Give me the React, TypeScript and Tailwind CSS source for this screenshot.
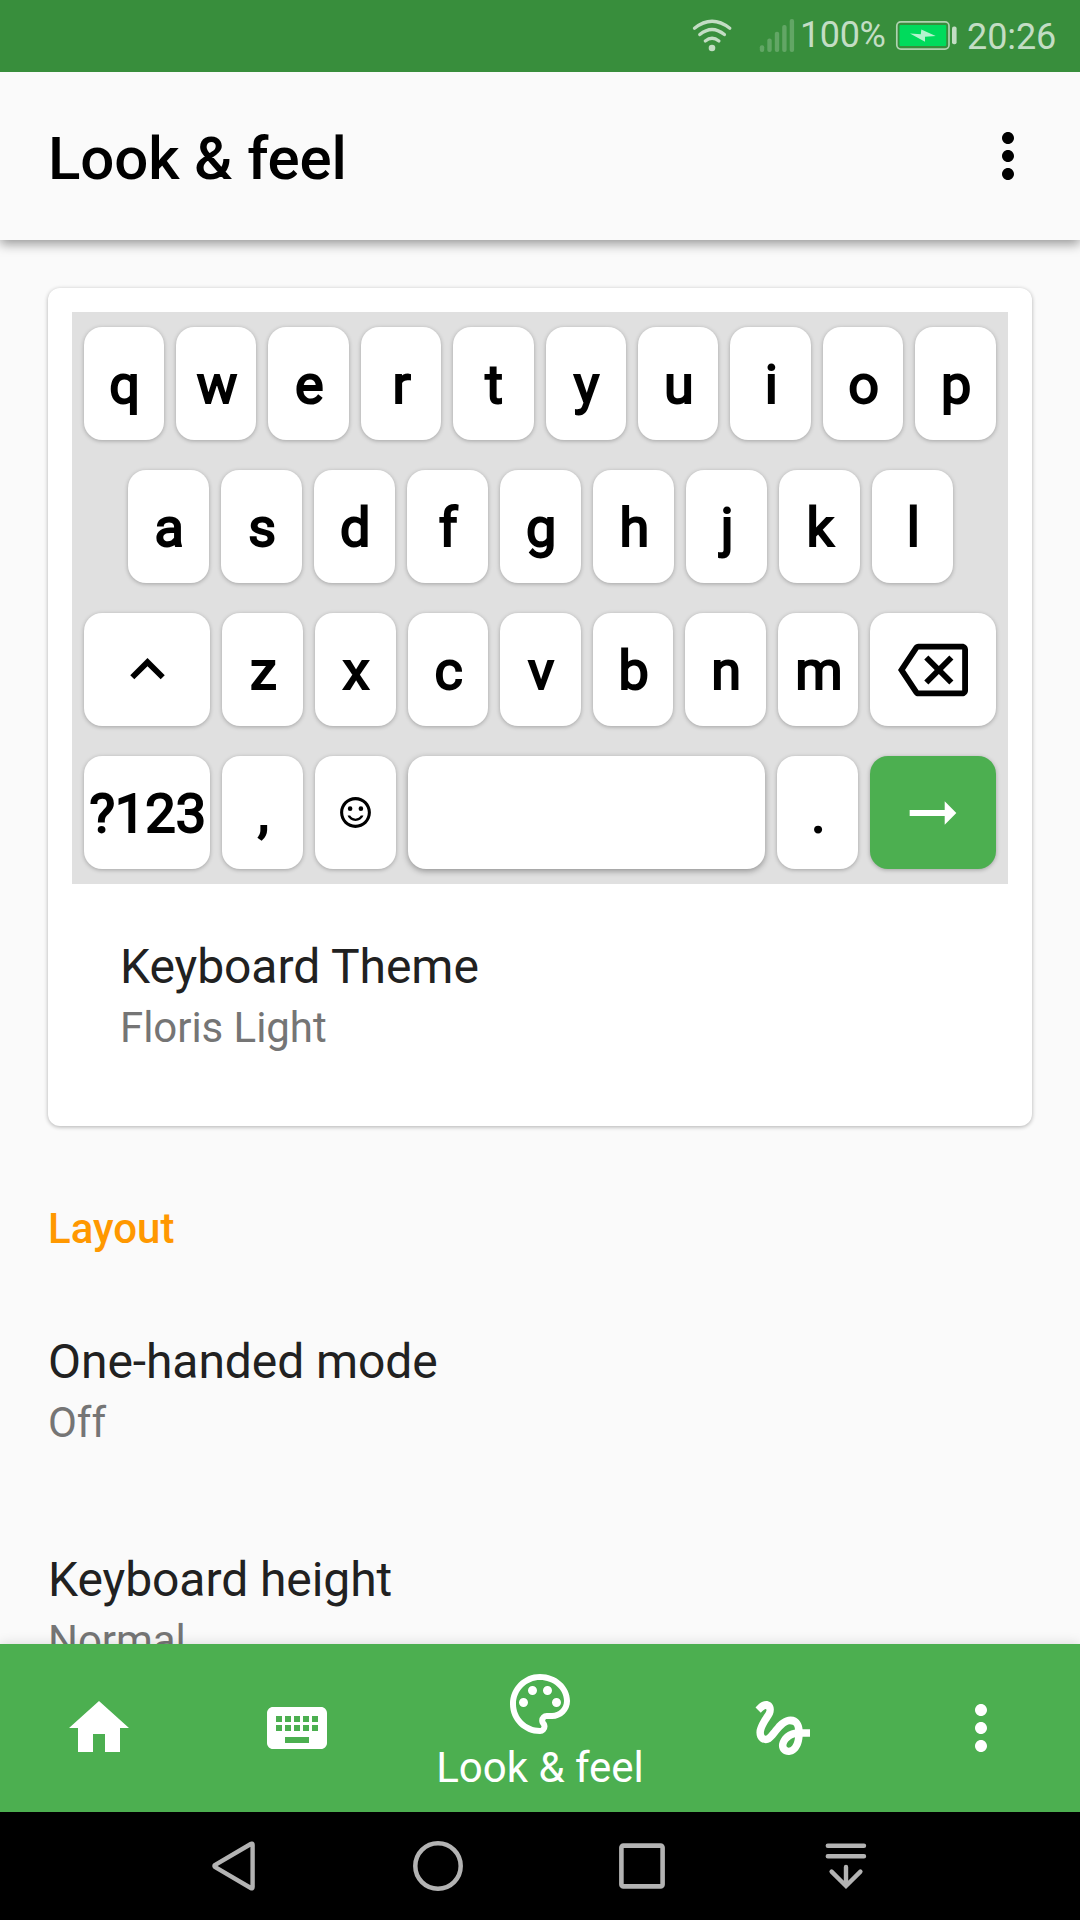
import React from "react";

const PATHS = {
  more: "M12 8c1.1 0 2-.9 2-2s-.9-2-2-2-2 .9-2 2 .9 2 2 2zm0 2c-1.1 0-2 .9-2 2s.9 2 2 2 2-.9 2-2-.9-2-2-2zm0 6c-1.1 0-2 .9-2 2s.9 2 2 2 2-.9 2-2-.9-2-2-2z",
  home: "M10 20v-6h4v6h5v-8h3L12 3 2 12h3v8z",
  keyboard:
    "M20 5H4c-1.1 0-1.99.9-1.99 2L2 17c0 1.1.9 2 2 2h16c1.1 0 2-.9 2-2V7c0-1.1-.9-2-2-2zm-9 3h2v2h-2V8zm0 3h2v2h-2v-2zM8 8h2v2H8V8zm0 3h2v2H8v-2zm-1 2H5v-2h2v2zm0-3H5V8h2v2zm9 7H8v-2h8v2zm0-4h-2v-2h2v2zm0-3h-2V8h2v2zm3 3h-2v-2h2v2zm0-3h-2V8h2v2z",
  palette:
    "M12 22C6.49 22 2 17.51 2 12S6.49 2 12 2s10 4.04 10 9c0 3.31-2.69 6-6 6h-1.77c-.28 0-.5.22-.5.5 0 .12.05.23.13.33.41.47.64 1.06.64 1.67A2.5 2.5 0 0112 22zm0-18c-4.41 0-8 3.59-8 8s3.59 8 8 8c.28 0 .5-.22.5-.5a.54.54 0 00-.14-.35c-.41-.46-.63-1.05-.63-1.65a2.5 2.5 0 012.5-2.5H16c2.21 0 4-1.79 4-4 0-3.86-3.59-7-8-7z M6.5 10a1.5 1.5 0 100 3 1.5 1.5 0 100-3z M9.5 6a1.5 1.5 0 100 3 1.5 1.5 0 100-3z M14.5 6a1.5 1.5 0 100 3 1.5 1.5 0 100-3z M17.5 10a1.5 1.5 0 100 3 1.5 1.5 0 100-3z",
  gesture:
    "M4.59 6.89c.7-.71 1.4-1.35 1.71-1.22.5.2 0 1.03-.3 1.52-.25.42-2.86 3.89-2.86 6.31 0 1.28.48 2.34 1.34 2.98.75.56 1.74.73 2.64.46 1.07-.31 1.95-1.4 3.06-2.77 1.21-1.49 2.83-3.44 4.08-3.44 1.63 0 1.65 1.01 1.76 1.79-3.78.64-5.38 3.67-5.38 5.37 0 1.7 1.44 3.09 3.21 3.09 1.63 0 4.29-1.33 4.69-6.1H21v-2.5h-2.47c-.15-1.65-1.09-4.2-4.03-4.2-2.25 0-4.18 1.91-4.94 2.84-.58.73-2.06 2.48-2.29 2.72-.25.3-.68.84-1.11.84-.45 0-.72-.83-.36-1.92.35-1.09 1.4-2.86 1.85-3.52.78-1.14 1.3-1.92 1.3-3.28C8.95 3.69 7.31 3 6.44 3 5.12 3 3.97 4 3.72 4.25c-.36.36-.66.66-.88.93l1.75 1.71zm9.29 11.66c-.31 0-.74-.26-.74-.72 0-.6.73-2.2 2.87-2.76-.3 2.69-1.43 3.48-2.13 3.48z",
  shift: "M7.41 15.41L12 10.83l4.59 4.58L18 14l-6-6-6 6z",
  backspace:
    "M22 3H7c-.69 0-1.23.35-1.59.88L0 12l5.41 8.11c.36.53.9.89 1.59.89h15c1.1 0 2-.9 2-2V5c0-1.1-.9-2-2-2zm0 16H7.07L2.4 12l4.66-7H22v14zm-11.59-2L14 13.41 17.59 17 19 15.59 15.41 12 19 8.41 17.59 7 14 10.59 10.41 7 9 8.41 12.59 12 9 15.59z",
  enter: "M16.01 11H4v2h12.01v3L20 12l-3.99-4v3z",
  smile:
    "M15.5 8a1.5 1.5 0 100 3 1.5 1.5 0 100-3z M8.5 8a1.5 1.5 0 100 3 1.5 1.5 0 100-3z M12 16c-1.48 0-2.75-.81-3.45-2H6.88c.8 2.05 2.79 3.5 5.12 3.5s4.32-1.45 5.12-3.5h-1.67c-.69 1.19-1.97 2-3.45 2zm-.01-14C6.47 2 2 6.48 2 12s4.47 10 9.99 10C17.52 22 22 17.52 22 12S17.52 2 11.99 2zM12 20c-4.42 0-8-3.58-8-8s3.58-8 8-8 8 3.58 8 8-3.58 8-8 8z",
};

function Icon({ name, className = "size-[72px]" }: { name: keyof typeof PATHS; className?: string }) {
  return (
    <svg viewBox="0 0 24 24" fill="currentColor" className={`block shrink-0 ${className}`}>
      <path d={PATHS[name]} />
    </svg>
  );
}

function StatusBar() {
  return (
    <div className="flex h-[72px] shrink-0 bg-[#388e3c] pl-[690px] text-[#c3ddc4]">
      <svg className="block h-[72px] w-[44px] shrink-0" viewBox="690 0 44 72" fill="none" stroke="currentColor" strokeWidth="3.3" strokeLinecap="round">
        <path d="M694.5 28.3 Q712 14.3 729.8 28.3" />
        <path d="M699.8 34.6 Q712 24.4 724.4 34.6" />
        <path d="M705.3 41 Q712 35.6 718.9 41" />
        <circle cx="712" cy="48" r="3.3" fill="currentColor" stroke="none" />
      </svg>
      <svg className="ml-6 block h-[72px] w-[38px] shrink-0" viewBox="758 0 38 72" fill="#62a665">
        <rect x="759.8" y="45.2" width="4.4" height="6.8" rx="2" />
        <rect x="767.3" y="38.4" width="4.4" height="13.6" rx="2" />
        <rect x="774.8" y="31.8" width="4.4" height="20.2" rx="2" />
        <rect x="782.2" y="25" width="4.4" height="27" rx="2" />
        <rect x="789.7" y="19" width="4.4" height="33" rx="2" />
      </svg>
      <div className="ml-1 w-[94px] pt-[15px] text-[36px] leading-[41px] tracking-[-0.4px]">100%</div>
      <svg className="block h-[72px] w-[64px] shrink-0" viewBox="894 0 64 72">
        <rect x="896.8" y="21.9" width="52.2" height="27.2" rx="4" fill="none" stroke="#b0d2b1" strokeWidth="1.7" />
        <rect x="899.5" y="25" width="46.7" height="21" rx="1" fill="#00db5c" />
        <path d="M910 33.6l10.8.7.5-4.7 14.4 6.4-10.7.8v4.9z" fill="#b3f4ce" />
        <rect x="952" y="26.6" width="4.6" height="17.6" rx="2" fill="#c3ddc4" />
      </svg>
      <div className="ml-[9px] pt-[17px] text-[36px] leading-[40px] tracking-[-0.1px]">20:26</div>
    </div>
  );
}

function Key({ children, className = "w-[81px]" }: { children?: React.ReactNode; className?: string }) {
  return (
    <div
      className={`flex h-[113px] shrink-0 items-center justify-center rounded-[18px] ${className.includes("shadow-") ? "" : "shadow-[0_1px_4px_rgba(0,0,0,0.28)]"} ${className.includes("bg-") ? "" : "bg-white"} ${className}`}
    >
      {children}
    </div>
  );
}

function Letter({ children }: { children: string }) {
  return (
    <span className="pt-[2px] pl-[1.5px] text-[54px] leading-[60px] text-black [-webkit-text-stroke:2px_black]">
      {children}
    </span>
  );
}

function Keyboard() {
  return (
    <div className="flex h-[572px] flex-col gap-[30px] bg-[#e0e0e0] px-3 py-[15px]">
      <div className="-ml-[0.4px] flex gap-3">
        {[..."qwertyuiop"].map((c) => (
          <Key key={c} className="w-[80.4px]"><Letter>{c}</Letter></Key>
        ))}
      </div>
      <div className="flex gap-3 pl-[44px]">
        {[..."asdfghjkl"].map((c) => (
          <Key key={c}><Letter>{c}</Letter></Key>
        ))}
      </div>
      <div className="ml-[0.45px] flex gap-3">
        <Key className="w-[126px]"><Icon name="shift" className="size-[69px]" /></Key>
        {[..."zxcvbnm"].map((c) => (
          <Key key={c} className="w-[80.57px]"><Letter>{c}</Letter></Key>
        ))}
        <Key className="w-[126px]"><Icon name="backspace" className="size-[70px]" /></Key>
      </div>
      <div className="flex gap-3">
        <Key className="w-[126px]"><Letter>?123</Letter></Key>
        <Key><Letter>,</Letter></Key>
        <Key><Icon name="smile" className="size-[37px]" /></Key>
        <Key className="w-[357px] shadow-[0_2px_6px_rgba(0,0,0,0.36)]" />
        <Key><Letter>.</Letter></Key>
        <Key className="w-[126px] bg-[#4caf50] text-white"><Icon name="enter" className="size-[70px]" /></Key>
      </div>
    </div>
  );
}

function Preference({ title, summary }: { title: string; summary: string }) {
  return (
    <div className="flex flex-col gap-2">
      <div className="text-[48px] leading-[56px] tracking-[-0.07px] text-[#212121]">{title}</div>
      <div className="text-[42px] leading-[50px] tracking-[-0.05px] text-[#757575]">{summary}</div>
    </div>
  );
}

function BottomItem({ name, label }: { name: keyof typeof PATHS; label?: string }) {
  return (
    <div className={`flex flex-col items-center ${label ? "w-[288px] pt-6" : "w-[198px] justify-center"}`}>
      <Icon name={name} />
      {label && <div className="text-[42px] leading-[56px] whitespace-nowrap">{label}</div>}
    </div>
  );
}

function SystemNav() {
  const slot = "block size-[60px] shrink-0";
  return (
    <div className="flex h-[108px] shrink-0 items-center gap-[144px] bg-black pl-[204px] text-[#b3b3b3]">
      <svg className={slot} viewBox="0 0 60 60" fill="none" stroke="currentColor" strokeWidth="4.4" strokeLinejoin="round">
        <path d="M47.8 8 Q48.6 7 48.6 9 V51 Q48.6 53 46.8 52 L11.2 31.2 Q9.6 30 11.2 28.8 L46.8 8 Q47.6 7.4 47.8 8Z" />
      </svg>
      <svg className={slot} viewBox="0 0 60 60" fill="none" stroke="currentColor" strokeWidth="4.5">
        <circle cx="30" cy="30" r="22.7" />
      </svg>
      <svg className={slot} viewBox="0 0 60 60" fill="none" stroke="currentColor" strokeWidth="4.6">
        <rect x="9.4" y="9.6" width="41.2" height="40.8" rx="2" />
      </svg>
      <svg className={slot} viewBox="0 0 60 60" fill="none" stroke="currentColor" strokeWidth="4.4" strokeLinecap="round">
        <path d="M11.8 9.7H48M11.8 20.3H48M30 31V49M15.6 35.6L30 50L44.4 35.6" />
      </svg>
    </div>
  );
}

export default function App() {
  return (
    <div className="flex h-[1920px] w-[1080px] flex-col overflow-hidden bg-[#fafafa] font-['Roboto',sans-serif]">
      <StatusBar />
      <header className="relative z-10 flex h-[168px] shrink-0 items-center justify-between bg-[#fafafa] pr-9 pl-12 text-black shadow-[0_4px_11px_rgba(0,0,0,0.4)] [clip-path:inset(0_0_-24px_0)]">
        <h1 className="pt-[5px] text-[60px] leading-[70px] font-medium tracking-[-0.12px]">Look &amp; feel</h1>
        <Icon name="more" />
      </header>
      <main className="min-h-0 flex-1 overflow-hidden px-12 pt-12">
        <section className="h-[838px] rounded-[12px] bg-white px-6 pt-6 shadow-[0_1px_4px_rgba(0,0,0,0.3)]">
          <Keyboard />
          <div className="pt-[55px] pl-12">
            <Preference title="Keyboard Theme" summary="Floris Light" />
          </div>
        </section>
        <h2 className="pt-[78px] text-[42px] leading-[50px] font-medium text-[#ff9800]">Layout</h2>
        <div className="flex flex-col gap-[104px] pt-[80px]">
          <Preference title="One-handed mode" summary="Off" />
          <Preference title="Keyboard height" summary="Normal" />
        </div>
      </main>
      <nav className="relative z-10 flex h-[168px] shrink-0 bg-[#4caf50] text-white shadow-[0_0_12px_rgba(0,0,0,0.14)]">
        <BottomItem name="home" />
        <BottomItem name="keyboard" />
        <BottomItem name="palette" label="Look &amp; feel" />
        <BottomItem name="gesture" />
        <BottomItem name="more" />
      </nav>
      <div className="relative z-20"><SystemNav /></div>
    </div>
  );
}
